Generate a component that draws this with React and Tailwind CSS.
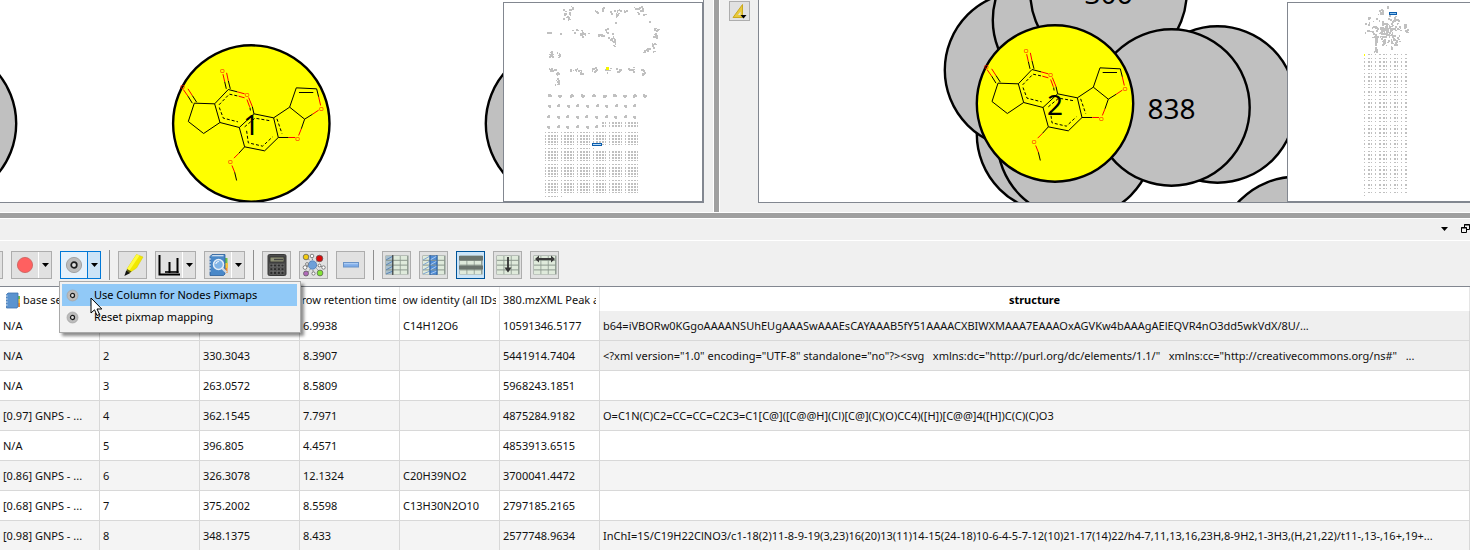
const GRAY = "#c0c0c0";
const INK = "#000";
const RED = "#f00";

/* ---------- molecule drawn inside the highlighted nodes ---------- */
function Atom({ x, y }) {
  return (
    <text x={x} y={y + 6} fontSize="18" textAnchor="middle" fill={RED} fontFamily="Liberation Sans, sans-serif">
      O
    </text>
  );
}

function Molecule({ x, y }) {
  return (
    <g transform={`translate(${x} ${y}) scale(0.3333) translate(-754 -370)`} fill="none" strokeWidth="3">
      <g stroke={INK}>
        <path d="M583 309L565 364L611 400L660 367L644 311Z" />
        <path d="M644 311L685 268L712 275M757 319L762 341L718 382L660 367" />
        <path d="M762 341L821 353L835 412L794 452L734 440L718 382" />
        <path d="M821 353L869 321L914 357L904 386M866 412L835 412" />
        <path d="M869 321L889 263L950 266L956 290M897 277H940M938 342L914 357" />
        <path d="M734 440L716 460M704 516L710 541" />
        <path d="M577 309L564 288M590 306L577 286M679 266L674 244M691 266L685 242" />
      </g>
      <g stroke={INK} strokeDasharray="9 6">
        <path d="M657 314L688 282L716 288M658 322L670 354L714 365M750 322L752 336" />
        <path d="M734 380L765 354L812 362M831 356L846 400M740 392L745 428L788 438L818 410" />
      </g>
      <g stroke={RED}>
        <path d="M564 288L550 268M577 286L564 266M674 244L669 222M685 242L680 218" />
        <path d="M712 275L734 281M746 292L757 319M716 288L734 293M741 298L749 320" />
        <path d="M904 386L896 406M886 412L866 412M956 290L962 316M956 330L938 342" />
        <path d="M716 460L702 474M696 496L704 516" />
      </g>
      <Atom x={548} y={262} />
      <Atom x={667} y={212} />
      <Atom x={741} y={285} />
      <Atom x={964} y={326} />
      <Atom x={893} y={416} />
      <Atom x={691} y={487} />
    </g>
  );
}

function Node({ x, y, label, active }) {
  return (
    <g>
      <circle cx={x} cy={y} r="78.2" fill={active ? "#ff0" : GRAY} stroke={INK} strokeWidth="2.4" />
      {active && <Molecule x={x} y={y} />}
      {label && (
        <text x={x} y={y + 11} fontSize="28" textAnchor="middle" fill={INK} fontFamily="Noto Sans, sans-serif">
          {label}
        </text>
      )}
    </g>
  );
}

/* ---------- overview maps ---------- */
function seeded(seed) {
  let s = seed;
  return () => {
    s = (s * 16807) % 2147483647;
    return s / 2147483647;
  };
}

function cloud(list, seed) {
  const rnd = seeded(seed);
  const out = [];
  list.forEach(([cx, cy, rx, ry, n]) => {
    for (let i = 0; i < n; i++) {
      const a = rnd() * Math.PI * 2;
      const r = Math.pow(rnd(), 0.7);
      out.push([
        Math.round(cx + Math.cos(a) * rx * r),
        Math.round(cy + Math.sin(a) * ry * r),
        rnd() > 0.3 ? 2 : 1,
        rnd() > 0.3 ? 2 : 1,
      ]);
    }
  });
  return out;
}

const NETWORKS = [
  [61, 10, 5, 5, 18], [67, 5, 2, 3, 5], [64, 16, 2, 2, 3],
  [92, 8, 3, 2, 6], [99, 6, 2, 4, 6], [106, 9, 2, 2, 3], [112, 8, 4, 5, 13], [121, 7, 2, 1, 4],
  [134, 6, 5, 4, 16], [140, 12, 1, 1, 2], [145, 18, 1, 1, 1], [111, 19, 1, 1, 1],
  [152, 26, 3, 2, 6], [151, 33, 2, 5, 8], [149, 41, 2, 3, 6], [146, 46, 6, 3, 11], [140, 48, 2, 1, 3],
  [44, 29, 2, 1, 3], [56, 30, 1, 1, 1], [72, 27, 4, 2, 8], [79, 30, 5, 3, 13],
  [96, 31, 4, 2, 8], [102, 26, 2, 4, 6], [108, 34, 5, 4, 13], [109, 41, 2, 3, 5],
  [47, 51, 4, 3, 11], [54, 51, 2, 4, 7],
  [48, 66, 4, 3, 10], [53, 70, 2, 3, 6], [54, 78, 4, 4, 9],
  [67, 66, 2, 3, 6], [73, 67, 4, 2, 9], [77, 69, 2, 2, 5], [90, 66, 4, 2, 9],
  [103, 66, 3, 3, 8], [115, 66, 3, 3, 9], [127, 66, 3, 3, 9], [138, 67, 2, 4, 9],
];

const MOTIFS = [
  [92, [45, 55, 67, 78, 89, 100, 110, 120, 130, 140]],
  [102, [45, 54, 64, 73, 83, 93, 102, 112, 121, 130]],
  [113, [44, 54, 63, 73, 82, 92, 102, 111, 121, 130]],
  [123, [44, 54, 63, 73, 83, 92]],
];

function LeftMap() {
  const dots = cloud(NETWORKS, 77);
  MOTIFS.forEach(([y, xs], j) =>
    xs.forEach((x, i) => {
      dots.push([x - 1, y, 3, 2], [x, y - 1 + ((i + j) % 2) * 2, 2, 2]);
      if (j === 0) dots.push([x + 1, y, 2, 2], [x - 1, y - 1 + (i % 3), 2, 2]);
    }),
  );
  const thick = (k) => k % 5 >= 1 && k % 5 <= 3;
  for (let r = -3; r <= 20; r++) {
    for (let c = 0; c < 30; c++) {
      if (r < 0 && (r === -1 || c < 18)) continue;
      if (r === 5 && c > 15) continue;
      if (r === 20 && c > 5) continue;
      dots.push([
        41 + Math.floor(c * 3.2),
        129 + Math.floor(r * 3.2),
        thick(c) ? 2 : 1,
        r < 0 || thick(r) ? 2 : 1,
      ]);
    }
  }
  return (
    <svg width="198" height="198" shapeRendering="crispEdges" role="img" aria-label="Network overview">
      {dots.map(([x, y, w, h], i) => (
        <rect key={i} x={x} y={y} width={w} height={h} fill={GRAY} />
      ))}
      <rect x="102" y="64" width="3" height="3" fill="#f3f300" />
      <rect x="88" y="140" width="10" height="3" fill="#0a5cad" />
      <rect x="89" y="141" width="8" height="1" fill="#b9dcf7" />
    </svg>
  );
}

const CLUSTERS = [
  [98, 25, 17, 14, 95], [98, 26, 7, 7, 35], [92, 9, 3, 3, 9], [99, 4, 1, 2, 4], [81, 14, 2, 2, 4], [79, 20, 3, 1, 3],
  [77, 29, 1, 1, 1], [81, 27, 2, 1, 3], [108, 16, 4, 3, 10], [116, 24, 2, 4, 7], [119, 27, 2, 2, 5],
  [87, 36, 3, 5, 12], [96, 40, 3, 3, 10], [107, 38, 5, 4, 16], [87, 46, 3, 3, 10], [103, 45, 1, 2, 4],
];
const WIDE_COLS = [1, 4, 5, 8, 11];
const TALL_ROWS = [2, 3, 6, 7, 10, 13, 14, 17, 20, 21, 24, 27, 28, 31, 32, 35];

function RightMap() {
  const dots = cloud(CLUSTERS, 1234);
  for (let r = 0; r < 39; r++) {
    for (let c = 0; c < 12; c++) {
      if (r === 38 && c > 0) continue;
      dots.push([
        76 + Math.round(c * 3.7),
        51 + Math.round(r * 3.72),
        WIDE_COLS.includes(c) ? 2 : 1,
        TALL_ROWS.includes(r) ? 2 : 1,
      ]);
    }
  }
  return (
    <svg width="182" height="198" shapeRendering="crispEdges" role="img" aria-label="Network overview">
      {dots.map(([x, y, w, h], i) => (
        <rect key={i} x={x} y={y} width={w} height={h} fill={GRAY} />
      ))}
      <rect x="76" y="51" width="1" height="2" fill="#ff0" />
      <rect x="101" y="9" width="8" height="3" fill="#0a5cad" />
      <rect x="102" y="10" width="6" height="1" fill="#8fc4ee" />
    </svg>
  );
}

/* ---------- toolbar icons ---------- */
function Arrow() {
  return (
    <svg width="7" height="4" viewBox="0 0 7 4" aria-hidden="true">
      <path d="M0 0H7L3.5 4Z" fill="#000" />
    </svg>
  );
}

function Ring({ size }) {
  return (
    <svg width={size} height={size} viewBox="0 0 18 18" aria-hidden="true">
      <circle cx="9" cy="9" r="7.6" fill="#bcbcbc" stroke="#a3a3a3" />
      <circle cx="9" cy="9" r="2.8" fill="#dedede" stroke="#1c1c1c" strokeWidth="1.7" />
    </svg>
  );
}

function Disc() {
  return (
    <svg width="18" height="18" viewBox="0 0 18 18" aria-hidden="true">
      <circle cx="9" cy="9" r="7.6" fill="#ff6060" stroke="#c9605c" strokeWidth="0.8" />
    </svg>
  );
}

function Marker() {
  return (
    <svg width="24" height="24" viewBox="0 0 24 24" aria-hidden="true">
      <path d="M15.500 1.500L22 4L15.500 15L9.500 19L6 16Z" fill="#f1e800" stroke="#d8cf10" strokeWidth="0.6" />
      <path d="M15.500 1.500L18.500 2.600L8.300 17.800L6 16Z" fill="#fffb40" />
      <path d="M6 16L10.500 18.500L8 20.500L5 20Z" fill="#5f5d12" />
      <path d="M5.200 17.600L8.800 20.200L3.400 23Z" fill="#111" />
    </svg>
  );
}

function ChartIcon() {
  return (
    <svg width="24" height="24" viewBox="0 0 24 24" fill="none" stroke="#000" aria-hidden="true">
      <path d="M2.500 2V21.500H23" strokeWidth="2" />
      <path d="M12.500 20V9M20.500 20V5" strokeWidth="2" />
      <path d="M8 19H21.500" strokeWidth="1.600" />
    </svg>
  );
}

function BookIcon() {
  return (
    <svg width="24" height="24" viewBox="0 0 24 24" aria-hidden="true">
      <path d="M19 5h2.500v5H19z" fill="#6cc04a" />
      <path d="M19 10h3v5h-3z" fill="#f6c33c" />
      <path d="M19 15h2.500v5H19z" fill="#f08a2c" />
      <path d="M4 3.500L6 1.500H19V21L17.500 22.500H4Z" fill="#4a88c8" stroke="#2b5e9b" strokeWidth="0.8" />
      <path d="M5.500 3.200H17.500V2.200H6.500Z" fill="#f4f8fc" />
      <path d="M3 6h2M3 9h2M3 12h2M3 15h2M3 18h2" stroke="#dfe9f4" />
      <path d="M16 15L20.500 19.500" stroke="#cfd6de" strokeWidth="2.400" />
      <circle cx="12.500" cy="11.500" r="5" fill="#7fb3e6" stroke="#e4edf6" strokeWidth="1.500" />
      <path d="M9.800 11a3 3 0 0 1 3-2.500" fill="none" stroke="#fff" />
    </svg>
  );
}

function SmallBook() {
  return (
    <svg width="16" height="17" viewBox="0 0 16 17" aria-hidden="true">
      <path d="M12 4h3v3h-3z" fill="#6cc04a" />
      <path d="M12 7h3v4h-3z" fill="#f6c33c" />
      <path d="M12 11h3v4h-3z" fill="#f08a2c" />
      <path d="M1.500 2.500L3 1H13V14.500L12 16H1.500Z" fill="#5b93cf" stroke="#3c72b0" strokeWidth="0.8" />
      <path d="M1 4h1.500M1 7h1.500M1 10h1.500M1 13h1.500" stroke="#e8eff7" />
    </svg>
  );
}

function CalculatorIcon() {
  return (
    <svg width="24" height="24" viewBox="0 0 24 24" aria-hidden="true">
      <rect x="3" y="1.500" width="18" height="21" rx="1.500" fill="#4d4d4d" stroke="#383838" />
      <rect x="5" y="4" width="14" height="5" fill="#8f9277" stroke="#2c2c2c" strokeWidth="0.8" />
      <path d="M9 6.500H18" stroke="#444" strokeWidth="1.400" />
      <g fill="#2b2b2b" stroke="#777" strokeWidth="0.5">
        {[5, 8.7, 12.4, 16.1].map((x) =>
          [11.2, 14.9, 18.6].map((y) => <rect key={`${x}-${y}`} x={x} y={y} width="2.800" height="2.600" />),
        )}
      </g>
    </svg>
  );
}

function NodesIcon() {
  return (
    <svg width="26" height="26" viewBox="0 0 26 26" stroke="#555" strokeWidth="0.7" aria-hidden="true">
      <path d="M6 5L12 13L19 6M12 13L6 22M12 13L20 21M12 13L4 15M12 13L23 15M12 13L11 4M12 13L12 22" strokeDasharray="1.500 1" fill="none" />
      <circle cx="11.500" cy="13" r="4.200" fill="#6f9fd8" stroke="#4a78b5" />
      <circle cx="5" cy="5" r="2.800" fill="#f2ca12" />
      <circle cx="18.500" cy="6.500" r="3.300" fill="#d80a0a" />
      <circle cx="5" cy="21.500" r="2.500" fill="#b06ab8" />
      <circle cx="19" cy="21" r="2.900" fill="#84e336" />
      <g fill="#fff">
        <circle cx="11" cy="4" r="1.800" />
        <circle cx="4" cy="15.500" r="1.900" />
        <circle cx="6" cy="12" r="1.400" />
        <circle cx="18.500" cy="13.500" r="1.400" />
        <circle cx="22.500" cy="15.500" r="1.700" />
        <circle cx="12.500" cy="21.500" r="1.600" />
      </g>
    </svg>
  );
}

function MinusIcon() {
  return (
    <svg width="18" height="8" viewBox="0 0 18 8" aria-hidden="true">
      <rect x="1.500" y="1.500" width="15" height="4.500" fill="#7fadea" stroke="#6b93c6" />
      <path d="M2 2.700H16" stroke="#b7d3f5" />
    </svg>
  );
}

function GridIcon({ kind }) {
  const xs = [1, 8.3, 15.6];
  const ys = [1, 5.8, 10.6, 15.4];
  return (
    <svg width="24" height="20" viewBox="0 0 24 20" aria-hidden="true">
      <rect x="0.500" y="0.500" width="23" height="19" fill="#8b978d" />
      {ys.map((y, r) =>
        xs.map((x, c) => {
          let fill = "#dfeadb";
          if (kind === "column" && c === 1) fill = "#4f8cd6";
          if (kind === "first" && c === 0) fill = "#a9c0ce";
          return <rect key={`${r}-${c}`} x={x} y={y} width="6.500" height="3.800" fill={fill} />;
        }),
      )}
      {kind === "rows" && <path d="M0 1H24V5.500H0ZM0 10.500H24V14.500H0Z" fill="#6b746d" />}
      {kind === "first" && (
        <g>
          <path d="M1 5L8 1M1 10L8 6M1 15L8 11M1 19L8 16" stroke="#5d86b4" />
          <path d="M7.800 0V20" stroke="#333" />
        </g>
      )}
      {kind === "column" && (
        <g>
          <path d="M1 5L8 1M1 10L8 6M1 15L8 11M1 19L8 16" stroke="#7fa5d2" />
          <path d="M8 5L15 1M8 10L15 6M8 15L15 11M8 19L15 16" stroke="#a9c9ee" />
          <rect x="8" y="0" width="7" height="20" fill="none" stroke="#1f5ba8" />
        </g>
      )}
      {kind === "down" && <path d="M12 2V13" stroke="#333" strokeWidth="1.800" />}
      {kind === "down" && <path d="M8.500 12.500H15.500L12 17.500Z" fill="#333" />}
      {kind === "wide" && <path d="M2 4L6 0.500V3H18V0.500L22 4L18 7.500V5H6V7.500Z" fill="#3a3a3a" />}
    </svg>
  );
}

/* ---------- toolbar ---------- */
function ToolButton({ label, active, children }) {
  return (
    <button
      type="button"
      aria-label={label}
      aria-pressed={active}
      className={
        active
          ? "flex h-7 w-[29px] shrink-0 items-center justify-center border border-[#005499] bg-[#cce4f7]"
          : "flex h-7 w-[29px] shrink-0 items-center justify-center border border-[#adadad] bg-[#e1e1e1]"
      }
    >
      {children}
    </button>
  );
}

function SplitButton({ label, open, children }) {
  return (
    <div
      className={
        open
          ? "flex h-7 w-[41px] shrink-0 border border-[#0078d7] bg-[#e5f1fb]"
          : "flex h-7 w-[41px] shrink-0 border border-[#adadad] bg-[#e1e1e1]"
      }
    >
      <button type="button" aria-label={label} className="flex min-w-0 flex-1 items-center justify-center">
        {children}
      </button>
      <button
        type="button"
        aria-label={`${label} options`}
        aria-haspopup="menu"
        aria-expanded={!!open}
        className={
          open
            ? "flex w-[13px] items-center justify-center border-l border-[#0078d7] bg-[#cce4f7]"
            : "flex w-[13px] items-center justify-center border-l border-white"
        }
      >
        <Arrow />
      </button>
    </div>
  );
}

function Divider() {
  return <div className="h-[30px] w-px shrink-0 bg-[#8f8f8f]" />;
}

function PixmapMenu() {
  return (
    <div
      role="menu"
      className="absolute top-full -left-px z-10 mt-0.5 w-[242px] border border-[#a9a9a9] bg-[#f2f2f2] p-0.5 pb-1 text-[11px] text-black shadow-[3px_3px_3px_rgba(0,0,0,0.45)]"
    >
      <button type="button" role="menuitem" className="flex h-[22px] w-[235px] items-center bg-[#91c9f7] pt-px">
        <span className="flex w-8 items-center pl-1">
          <Ring size={13} />
        </span>
        Use Column for Nodes Pixmaps
      </button>
      <button type="button" role="menuitem" className="flex h-[22px] w-[235px] items-center pt-px">
        <span className="flex w-8 items-center pl-1">
          <Ring size={13} />
        </span>
        Reset pixmap mapping
      </button>
      <svg className="absolute top-[15px] left-[30px]" width="13" height="20" viewBox="0 0 13 20" aria-hidden="true">
        <path d="M1 1V16L4.500 12.800L7 18.500L9.500 17.400L7 12H11.800Z" fill="#fff" stroke="#000" />
      </svg>
    </div>
  );
}

/* ---------- table ---------- */
const ROWS = [
  ["N/A", "1", "", "6.9938", "C14H12O6", "10591346.5177", "b64=iVBORw0KGgoAAAANSUhEUgAAASwAAAEsCAYAAAB5fY51AAAACXBIWXMAAA7EAAAOxAGVKw4bAAAgAElEQVR4nO3dd5wkVdX/8U/..."],
  ["N/A", "2", "330.3043", "8.3907", "", "5441914.7404", '<?xml version="1.0" encoding="UTF-8" standalone="no"?><svg   xmlns:dc="http://purl.org/dc/elements/1.1/"   xmlns:cc="http://creativecommons.org/ns#"   ...'],
  ["N/A", "3", "263.0572", "8.5809", "", "5968243.1851", ""],
  ["[0.97] GNPS - ...", "4", "362.1545", "7.7971", "", "4875284.9182", "O=C1N(C)C2=CC=CC=C2C3=C1[C@]([C@@H](Cl)[C@](C)(O)CC4)([H])[C@@]4([H])C(C)(C)O3"],
  ["N/A", "5", "396.805", "4.4571", "", "4853913.6515", ""],
  ["[0.86] GNPS - ...", "6", "326.3078", "12.1324", "C20H39NO2", "3700041.4472", ""],
  ["[0.68] GNPS - ...", "7", "375.2002", "8.5598", "C13H30N2O10", "2797185.2165", ""],
  ["[0.98] GNPS - ...", "8", "348.1375", "8.433", "", "2577748.9634", "InChI=1S/C19H22ClNO3/c1-18(2)11-8-9-19(3,23)16(20)13(11)14-15(24-18)10-6-4-5-7-12(10)21-17(14)22/h4-7,11,13,16,23H,8-9H2,1-3H3,(H,21,22)/t11-,13-,16+,19+..."],
];

function HeadCell({ children, align }) {
  return (
    <th className="border-r border-[#e5e5e5] px-[3px] pt-0.5 font-normal">
      <div
        className={
          align === "left"
            ? "flex items-center gap-0.5 overflow-hidden whitespace-nowrap"
            : "flex items-center justify-center overflow-hidden whitespace-nowrap"
        }
      >
        {children}
      </div>
    </th>
  );
}

function DataTable() {
  return (
    <table className="w-full table-fixed border-separate border-spacing-0 bg-white text-left text-[11px] leading-4 text-[#111]">
      <colgroup>
        <col className="w-[100px]" />
        <col className="w-[100px]" />
        <col className="w-[100px]" />
        <col className="w-[100px]" />
        <col className="w-[100px]" />
        <col className="w-[100px]" />
        <col />
      </colgroup>
      <thead>
        <tr className="h-6">
          <HeadCell align="left">
            <span className="flex shrink-0 items-center pl-0.5">
              <SmallBook />
            </span>
            base search
          </HeadCell>
          <HeadCell>index</HeadCell>
          <HeadCell>parent mass</HeadCell>
          <HeadCell>row retention time</HeadCell>
          <HeadCell>row identity (all IDs)</HeadCell>
          <HeadCell align="left">380.mzXML Peak area</HeadCell>
          <th className="border-r border-[#e5e5e5] pt-0.5 text-center font-bold text-black">structure</th>
        </tr>
      </thead>
      <tbody>
        {ROWS.map((row, r) => (
          <tr key={row[1]} className={r % 2 ? "h-[30px] bg-[#f4f4f4]" : "h-[30px] bg-white"}>
            {row.map((cell, c) => (
              <td
                key={c}
                className={
                  c === 6 && r < 2
                    ? "overflow-hidden border-r border-b border-[#d8d8d8] bg-[#efefef] px-[3px] whitespace-pre"
                    : "overflow-hidden border-r border-b border-[#d8d8d8] px-[3px] whitespace-pre"
                }
              >
                {cell}
              </td>
            ))}
          </tr>
        ))}
      </tbody>
    </table>
  );
}

export default function App() {
  return (
    <div className="flex min-h-screen flex-col overflow-hidden bg-[#f0f0f0] font-['Noto_Sans',sans-serif]">
      <div className="grid h-[212px] grid-cols-[minmax(0,713fr)_7px_minmax(0,750fr)]">
        <section className="pr-[9px] pb-[9px]">
          <div className="relative h-full overflow-hidden border-r border-b border-[#828790] bg-white">
            <svg className="h-full w-full" viewBox="0 0 703 202" preserveAspectRatio="xMinYMin slice" role="img" aria-label="Network view">
              <Node x={-62} y={123.5} />
              <Node x={251.3} y={123.5} label="1" active />
              <Node x={564} y={123.5} />
            </svg>
            <div className="absolute right-0 bottom-0 overflow-hidden border border-[#828790] bg-white">
              <LeftMap />
            </div>
          </div>
        </section>
        <div className="border-x border-white bg-[#a0a0a0]" />
        <section className="flex pb-[9px]">
          <div className="flex w-[38px] shrink-0 justify-center pt-px">
            <button type="button" aria-label="Measure" className="flex h-5 w-[21px] items-center justify-center border border-[#adadad] bg-[#e1e1e1]">
              <svg width="17" height="16" viewBox="0 0 17 16" aria-hidden="true">
                <path d="M2 14.500L11.500 1.500V14.500Z" fill="#e8c93a" stroke="#c9a820" />
                <path d="M7 12L9.500 8.500V12Z" fill="#e1e1e1" />
                <path d="M9.500 12H15.500L12.500 15.500Z" fill="#000" />
              </svg>
            </button>
          </div>
          <div className="relative min-w-0 flex-1 overflow-hidden border-b border-l border-[#828790] bg-white">
            <svg className="h-full w-full" viewBox="759 0 711 202" preserveAspectRatio="xMinYMin slice" role="img" aria-label="Network view">
              <Node x={1296} y={255} />
              <Node x={1055} y={134} />
              <Node x={1075.5} y={140} />
              <Node x={1023} y={70} />
              <Node x={1071} y={20} />
              <Node x={1108.5} y={-7.5} label="306" />
              <Node x={1217.5} y={104.5} />
              <Node x={1171.5} y={107.5} label="838" />
              <Node x={1055} y={103.5} label="2" active />
            </svg>
            <div className="absolute right-0 bottom-0 overflow-hidden border-y border-l border-[#828790] bg-white">
              <RightMap />
            </div>
          </div>
        </section>
      </div>
      <div className="h-[7px] border-y border-white bg-[#a0a0a0]" />
      <div className="flex h-[22px] items-center justify-end gap-[13px] border-b border-white pb-0.5">
        <button type="button" aria-label="Panel menu" className="flex">
          <Arrow />
        </button>
        <button type="button" aria-label="Float panel" className="flex">
          <svg width="9" height="9" viewBox="0 0 9 9" fill="none" stroke="#000" aria-hidden="true">
            <path d="M3.500 3V0.500H8.500V5.500H6" />
            <path d="M3 1H9" />
            <path d="M0.500 3.500H5.500V8.500H0.500ZM0 4H6" />
          </svg>
        </button>
      </div>
      <div className="flex h-[46px] items-center gap-2 border-b border-[#828790] pt-1.5 pb-1">
        <button type="button" aria-label="Label" className="h-7 w-[3px] shrink-0 border border-l-0 border-[#adadad] bg-[#e1e1e1]" />
        <SplitButton label="Node color">
          <Disc />
        </SplitButton>
        <div className="relative">
          <SplitButton label="Node pixmap" open>
            <Ring size={18} />
          </SplitButton>
          <PixmapMenu />
        </div>
        <Divider />
        <ToolButton label="Highlight">
          <Marker />
        </ToolButton>
        <SplitButton label="Charts">
          <ChartIcon />
        </SplitButton>
        <SplitButton label="Search databases">
          <BookIcon />
        </SplitButton>
        <Divider />
        <ToolButton label="Formula">
          <CalculatorIcon />
        </ToolButton>
        <ToolButton label="Clusters">
          <NodesIcon />
        </ToolButton>
        <ToolButton label="Remove">
          <MinusIcon />
        </ToolButton>
        <Divider />
        <ToolButton label="Freeze first column">
          <GridIcon kind="first" />
        </ToolButton>
        <ToolButton label="Select column">
          <GridIcon kind="column" />
        </ToolButton>
        <ToolButton label="Alternate rows" active>
          <GridIcon kind="rows" />
        </ToolButton>
        <ToolButton label="Fit height">
          <GridIcon kind="down" />
        </ToolButton>
        <ToolButton label="Fit width">
          <GridIcon kind="wide" />
        </ToolButton>
      </div>
      <DataTable />
    </div>
  );
}
